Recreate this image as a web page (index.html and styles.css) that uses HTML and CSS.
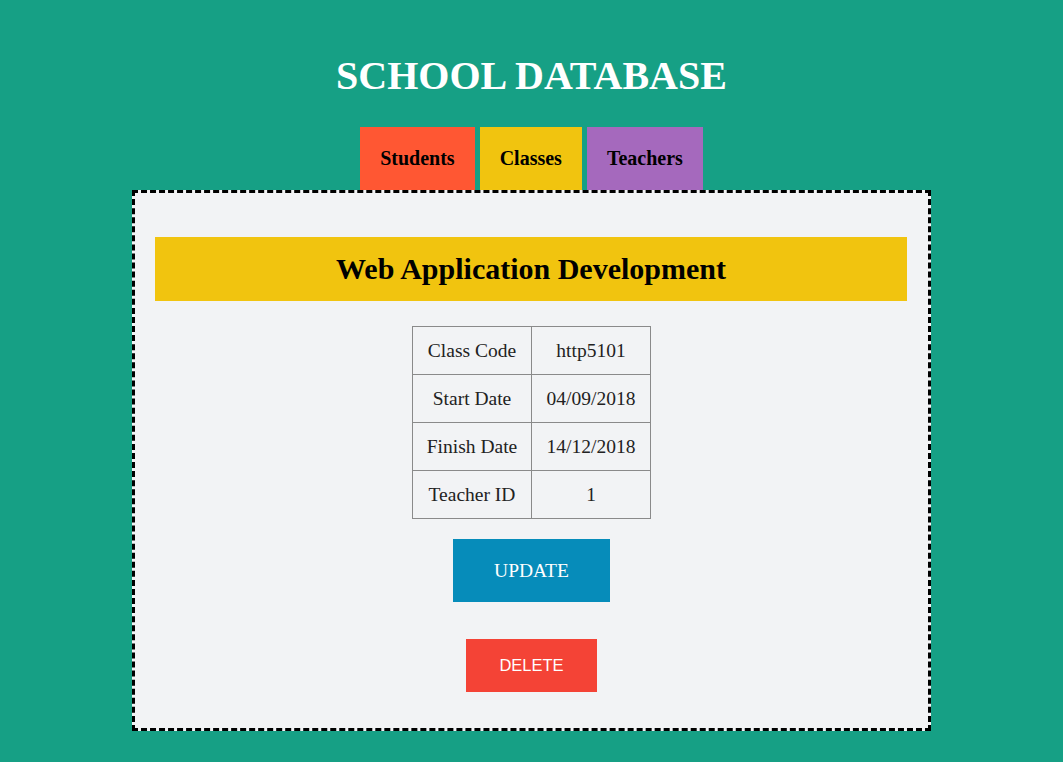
FILE: index.html
```html
<!DOCTYPE html>
<html lang="en">
<head>
<meta charset="utf-8">
<title>School Database</title>
<link rel="stylesheet" href="styles.css">
</head>
<body>
<h1 class="site-title">SCHOOL DATABASE</h1>
<nav class="tabs">
  <a class="tab tab-students" href="#">Students</a>
  <a class="tab tab-classes" href="#">Classes</a>
  <a class="tab tab-teachers" href="#">Teachers</a>
</nav>
<main class="panel">
  <h2 class="class-title">Web Application Development</h2>
  <table class="info">
    <tr><td>Class Code</td><td>http5101</td></tr>
    <tr><td>Start Date</td><td>04/09/2018</td></tr>
    <tr><td>Finish Date</td><td>14/12/2018</td></tr>
    <tr><td>Teacher ID</td><td>1</td></tr>
  </table>
  <a class="btn-update" href="#">UPDATE</a>
  <button class="btn-delete" type="button">DELETE</button>
</main>
</body>
</html>
```
FILE: styles.css
```css
html, body {
  margin: 0;
  padding: 0;
}
body {
  background: #16a085;
  font-family: "Liberation Serif", "Times New Roman", serif;
  color: #000;
  padding-bottom: 31px;
}
.site-title {
  margin: 0;
  padding-top: 53px;
  font-size: 40px;
  line-height: 46px;
  font-weight: bold;
  color: #fff;
  text-align: center;
}
.tabs {
  display: flex;
  justify-content: center;
  gap: 5px;
  margin-top: 28px;
}
.tab {
  display: block;
  padding: 21px 20px;
  font-size: 20px;
  line-height: 21px;
  font-weight: bold;
  color: #000;
  text-decoration: none;
}
.tab-students { background: #ff5733; }
.tab-classes { background: #f1c40f; }
.tab-teachers { background: #a569bd; }

.panel {
  width: 753px;
  margin: 0 auto;
  padding: 44px 20px 36px;
  border: 3px dashed #000;
  background: #f2f3f5;
  display: flex;
  flex-direction: column;
  align-items: center;
}
.class-title {
  align-self: stretch;
  margin: 0 1px 0 0;
  padding: 15px 0;
  background: #f1c40f;
  font-size: 30px;
  line-height: 34px;
  font-weight: bold;
  text-align: center;
}
.info {
  margin-top: 25px;
  border-collapse: collapse;
  table-layout: fixed;
  width: 239px;
  font-size: 19.5px;
  color: #222;
}
.info td {
  border: 1px solid #8a8a8a;
  padding: 12px 6px;
  line-height: 23px;
  text-align: center;
  white-space: nowrap;
}
.btn-update {
  display: block;
  margin-top: 20px;
  width: 157px;
  height: 63px;
  line-height: 63px;
  background: #068cba;
  color: #fff;
  font-size: 19.5px;
  text-align: center;
  text-decoration: none;
}
.btn-delete {
  display: block;
  margin-top: 37px;
  width: 131px;
  height: 53px;
  padding: 0;
  border: none;
  background: #f44336;
  color: #fff;
  font-family: "Liberation Sans", Arial, sans-serif;
  font-size: 16.5px;
  text-align: center;
}
```
